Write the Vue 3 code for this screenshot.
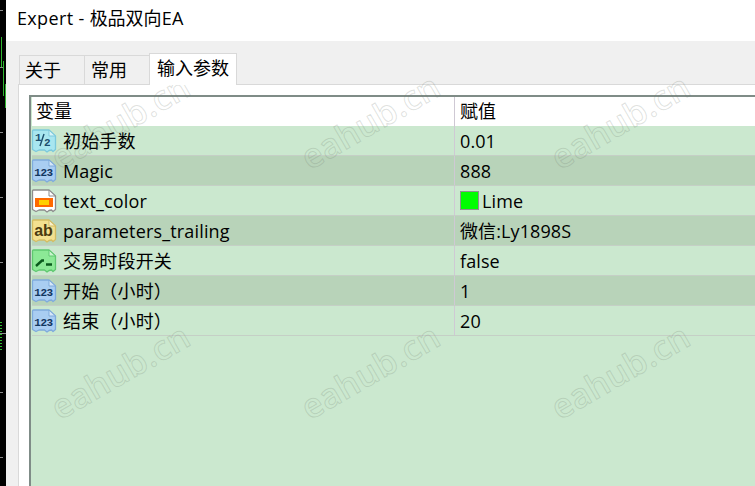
<script setup>
const rows = [
  { name: '初始手数', value: '0.01', icon: 'frac' },
  { name: 'Magic', value: '888', icon: 'num' },
  { name: 'text_color', value: 'Lime', icon: 'color', swatch: true },
  { name: 'parameters_trailing', value: '微信:Ly1898S', icon: 'str' },
  { name: '交易时段开关', value: 'false', icon: 'bool' },
  { name: '开始（小时）', value: '1', icon: 'num' },
  { name: '结束（小时）', value: '20', icon: 'num' },
]
const palettes = {
  frac: { fill: '#a8e6f0', edge: '#7cc9dc', ink: '#1c4f6e' },
  num: { fill: '#a9cdf2', edge: '#7fabdc', ink: '#12365f' },
  color: { fill: '#ffffff', edge: '#8d8d8d', ink: '#000' },
  str: { fill: '#f3e08f', edge: '#d3bc62', ink: '#4a3a10' },
  bool: { fill: '#8ce996', edge: '#5fc870', ink: '#0c5c1e' },
}
const labels = { num: '123', str: 'ab' }
const marks = [0, 1, 2, 3, 4, 5]
const ticks = [10, 67, 132, 197, 262, 392, 457]
</script>

<template>
  <div class="page">
    <div class="strip">
      <i v-for="t in ticks" :key="t" class="tick" :style="{ top: t + 'px' }"></i>
      <i class="tick long"></i>
      <i class="bar a"></i><i class="bar b"></i><i class="bar c"></i><i class="dashes"></i>
    </div>
    <div class="dialog">
      <div class="title"><span class="latin">Expert - </span>极品双向<span class="latin">EA</span></div>
      <div class="body">
        <div class="tabs">
          <div class="tab t1">关于</div>
          <div class="tab t2">常用</div>
          <div class="tab active">输入参数</div>
        </div>
        <div class="panel">
          <div class="list">
            <div class="head">
              <div class="c1">变量</div>
              <div class="c2">赋值</div>
            </div>
            <div v-for="(r, i) in rows" :key="i" class="row" :class="{ alt: i % 2 === 1 }">
              <div class="c1 name">
                <svg class="icon" width="26" height="26" viewBox="0 0 26 26">
                  <path d="M1.500 3 Q1.500 2 2.500 2 H18 L24.500 8 V21.500 L22 23.500 L20.500 22 L18 22.500 L16 24 L13.500 22 H8 L5 23.500 L1.500 21.500 Z"
                    :fill="palettes[r.icon].fill" :stroke="palettes[r.icon].edge" stroke-width="1.300" stroke-linejoin="round" />
                  <path d="M18 2 V8 H24.500 Z" fill="#ffffff" fill-opacity="0.55" :stroke="palettes[r.icon].edge" stroke-width="1" stroke-linejoin="round" />
                  <template v-if="r.icon === 'color'">
                    <rect x="4" y="10" width="18" height="9" fill="#ff6a00" />
                    <rect x="8" y="12" width="10" height="5" fill="#ffd000" />
                  </template>
                  <path v-else-if="r.icon === 'bool'" d="M5 18 L11 12.500 H13 M15 16.500 H21" fill="none" stroke="#0a5a1c" stroke-width="2.400" />
                  <template v-else-if="r.icon === 'frac'">
                    <text class="glyph frac" x="4" y="13" :fill="palettes[r.icon].ink">1</text>
                    <path d="M9 18 L13 6" :stroke="palettes[r.icon].ink" stroke-width="1.400" fill="none" />
                    <text class="glyph frac" x="13" y="18" :fill="palettes[r.icon].ink">2</text>
                  </template>
                  <text v-else class="glyph" :class="r.icon" x="12.500" y="17.500" text-anchor="middle" :fill="palettes[r.icon].ink">{{ labels[r.icon] }}</text>
                </svg>
                <span>{{ r.name }}</span>
              </div>
              <div class="c2 value">
                <i v-if="r.swatch" class="swatch"></i>
                <span>{{ r.value }}</span>
              </div>
            </div>
          </div>
        </div>
      </div>
    </div>
    <div class="marks">
      <div v-for="m in marks" :key="m" class="cell"><span class="mark">eahub.cn</span></div>
    </div>
  </div>
</template>

<style>
html, body { margin: 0; background: #fff; overflow: hidden; }
</style>

<style scoped>
.page {
  position: relative;
  width: 755px;
  height: 486px;
  display: flex;
  overflow: hidden;
  font-family: "Open Sans", "Noto Sans CJK SC", sans-serif;
  font-size: 18px;
  color: #000;
}
.strip { position: relative; width: 6px; background: #000; flex: none; }
.tick { position: absolute; left: 0; width: 3px; height: 1px; background: #8a8a8a; }
.tick.long { top: 333px; width: 6px; }
.bar { position: absolute; width: 1px; background: #2fb52f; }
.bar.a { left: 1px; top: 37px; height: 30px; }
.bar.b { left: 3px; top: 61px; height: 35px; }
.bar.c { left: 5px; top: 84px; height: 24px; }
.dashes {
  position: absolute;
  left: 0;
  top: 322px;
  width: 2px;
  height: 28px;
  background: repeating-linear-gradient(#2fb52f 0 1px, transparent 1px 3px);
}
.dialog { flex: 1; display: flex; flex-direction: column; min-width: 0; }
.title {
  height: 41px;
  box-sizing: border-box;
  padding: 6px 0 0 11px;
  background: #fff;
  line-height: 24px;
}
.latin { letter-spacing: 0.35px; white-space: pre; }
.body { flex: 1; background: #f0f0f0; display: flex; flex-direction: column; padding-left: 12px; min-height: 0; }
.tabs { display: flex; height: 43px; align-items: flex-end; padding-left: 1px; }
.tab {
  box-sizing: border-box;
  height: 29px;
  line-height: 29px;
  border: 1px solid #d9d9d9;
  border-bottom: 0;
  background: #f0f0f0;
  padding-left: 5px;
  margin-right: -1px;
}
.t1 { width: 66px; }
.t2 { width: 66px; padding-left: 6px; }
.tab.active {
  position: relative;
  width: 88px;
  height: 32px;
  line-height: 29px;
  padding-left: 7px;
  background: #fff;
  z-index: 1;
  margin-bottom: -1px;
}
.panel {
  flex: 1;
  min-height: 0;
  background: #fff;
  border-left: 1px solid #d9d9d9;
  border-top: 1px solid #d9d9d9;
  padding: 10px 0 0 10px;
}
.list {
  height: 100%;
  background: #cbe8cf;
  border-left: 2px solid #7f8c87;
  border-top: 2px solid #7f8c87;
  box-sizing: border-box;
  padding-left: 1px;
}
.head { display: flex; height: 29px; background: #fff; line-height: 28px; }
.row { display: flex; height: 29px; border-bottom: 1px solid #c5cfc6; line-height: 29px; background: #cbe8cf; }
.row.alt { background: #b8d3b9; }
.c1 { width: 423px; flex: none; border-right: 1px solid #cfc9d4; box-sizing: border-box; padding-left: 4px; }
.c2 { flex: 1; padding-left: 5px; }
.name { display: flex; align-items: center; padding-left: 0; }
.name span { letter-spacing: 0.16px; }
.icon { flex: none; margin: 0 6px 0 -1px; }
.name span, .value span { position: relative; top: 1px; }
.value span { letter-spacing: 0.1px; }
.value { display: flex; align-items: center; }
.swatch { width: 19px; height: 19px; box-sizing: border-box; background: #00ff00; border: 1px solid #909090; margin-right: 3px; }
.glyph { font-family: "Liberation Mono", monospace; font-weight: 700; font-size: 11px; letter-spacing: -0.5px; }
.glyph.frac { font-size: 11px; }
.glyph.str { font-size: 16px; font-family: "Liberation Sans", sans-serif; letter-spacing: 0; }
.marks {
  position: absolute;
  left: 0;
  top: 0;
  display: grid;
  grid-template-columns: repeat(3, 250px);
  grid-auto-rows: 250px;
  pointer-events: none;
}
.cell { position: relative; }
.mark {
  position: absolute;
  left: 43px;
  top: 98px;
  font-family: "Open Sans", sans-serif;
  font-weight: 600;
  font-size: 34px;
  letter-spacing: 0.3px;
  color: transparent;
  -webkit-text-stroke: 1px rgba(110, 120, 110, 0.22);
  transform: rotate(-30deg);
  white-space: nowrap;
}
</style>
